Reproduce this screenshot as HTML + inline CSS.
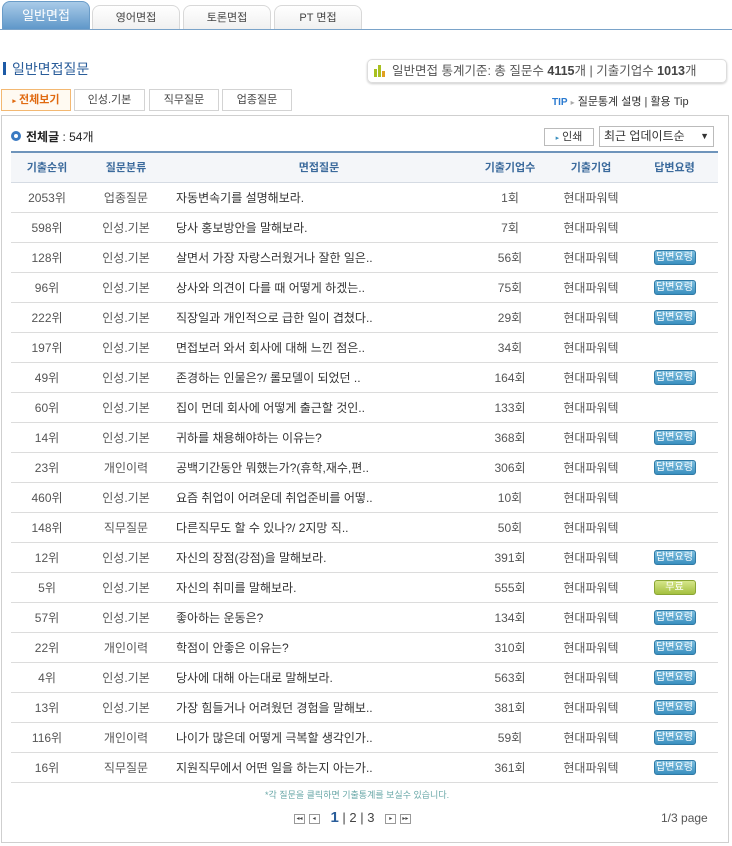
<!DOCTYPE html>
<html><head><meta charset="utf-8">
<style>
*{margin:0;padding:0;box-sizing:border-box}
body{width:732px;height:846px;background:#fff;font-family:"Liberation Sans","Noto Sans CJK KR",sans-serif;font-size:12px;color:#555;position:relative;overflow:hidden}
.a{position:absolute}
.tab{position:absolute;top:5px;height:24px;border:1px solid #d8d8d8;border-bottom:none;border-radius:8px 8px 0 0;background:linear-gradient(#fff,#f0f0f0);text-align:center;line-height:24px;font-size:11px;color:#444}
.tab.on{top:1px;height:28px;background:linear-gradient(#a9cbe8,#5f97c9);border-color:#6a9cc8;color:#fff;font-size:13px;line-height:28px}
.sub{position:absolute;top:89px;height:22px;border:1px solid #d3d3d3;background:#fff;text-align:center;line-height:20px;font-size:11px;color:#444}
.sub.on{border-color:#f3b872;color:#e06a10;font-weight:bold;background:#fffaf2}
table{position:absolute;left:11px;top:151px;width:707px;border-collapse:collapse;border-top:2px solid #6e94bb}
th{height:30px;background:#f4f6f9;color:#3b6a9c;font-size:11px;font-weight:bold;border-bottom:1px solid #d5dbe3}
td{height:30px;border-bottom:1px solid #dcdcdc;font-size:12px;color:#555;text-align:center;white-space:nowrap}
td.q{text-align:left;padding-left:7px;color:#333}
.b{display:inline-block;width:42px;height:15px;border-radius:3px;background:linear-gradient(#7fc0df,#3a8fbf);border:1px solid #2f7aa6;color:#fff;font-size:10px;line-height:13px;vertical-align:middle}
.b.g{background:linear-gradient(#d6e68a,#a4c040);border-color:#8aa534}
.pg{display:inline-block;width:11px;height:10px;border:1px solid #999;font-size:6px;line-height:8px;text-align:center;color:#444;vertical-align:middle}
</style></head><body>
<div class="a" style="left:0;top:29px;width:732px;height:1px;background:#7aa3c9"></div>
<div class="tab on" style="left:2px;width:88px">일반면접</div>
<div class="tab" style="left:92px;width:88px">영어면접</div>
<div class="tab" style="left:183px;width:88px">토론면접</div>
<div class="tab" style="left:274px;width:88px">PT 면접</div>

<div class="a" style="left:3px;top:62px;width:3px;height:13px;background:#1d5aa6"></div>
<div class="a" style="left:12px;top:59px;font-size:14px;color:#2a5d9a">일반면접질문</div>

<div class="a" style="left:367px;top:59px;width:360px;height:24px;border:1px solid #ddd;border-radius:5px;box-shadow:0 1px 2px #ccc;font-size:12.5px;color:#555;line-height:22px;padding-left:24px">
<span class="a" style="left:6px;top:9px;width:3px;height:8px;background:#a8c020"></span><span class="a" style="left:10px;top:5px;width:3px;height:12px;background:#a8c020"></span><span class="a" style="left:14px;top:11px;width:3px;height:6px;background:#e0a020"></span>
일반면접 통계기준: 총 질문수 <b style="color:#444">4115</b>개 | 기출기업수 <b style="color:#444">1013</b>개</div>
<div class="a" style="left:552px;top:93px;font-size:11px;color:#333"><b style="color:#2a7ad0;font-size:10px">TIP</b> <span style="color:#aaa;font-size:8px">▸</span> 질문통계 설명 | 활용 Tip</div>

<div class="sub on" style="left:1px;width:70px"><span style="font-size:7px">▸</span> 전체보기</div>
<div class="sub" style="left:74px;width:71px">인성.기본</div>
<div class="sub" style="left:149px;width:70px">직무질문</div>
<div class="sub" style="left:222px;width:70px">업종질문</div>

<div class="a" style="left:1px;top:115px;width:728px;height:728px;border:1px solid #cfcfcf"></div>
<div class="a" style="left:11px;top:131px;width:10px;height:10px;border:3px solid #3a7ac2;border-radius:50%"></div>
<div class="a" style="left:26px;top:128px;font-size:12px;color:#222"><b>전체글</b> : 54개</div>
<div class="a" style="left:544px;top:128px;width:50px;height:18px;border:1px solid #bbb;font-size:11px;line-height:16px;text-align:center;color:#333"><span style="color:#3a8fbf;font-size:7px">▸</span> 인쇄</div>
<div class="a" style="left:599px;top:126px;width:115px;height:21px;border:1px solid #bbb;font-size:12px;line-height:19px;padding-left:4px;color:#333">최근 업데이트순 <span style="position:absolute;right:4px;font-size:9px">▼</span></div>

<table>
<tr><th style="width:72px">기출순위</th><th style="width:86px">질문분류</th><th style="width:300px">면접질문</th><th style="width:82px">기출기업수</th><th style="width:80px">기출기업</th><th>답변요령</th></tr>
<tr><td>2053위</td><td>업종질문</td><td class="q">자동변속기를 설명해보라.</td><td>1회</td><td>현대파워텍</td><td></td></tr>
<tr><td>598위</td><td>인성.기본</td><td class="q">당사 홍보방안을 말해보라.</td><td>7회</td><td>현대파워텍</td><td></td></tr>
<tr><td>128위</td><td>인성.기본</td><td class="q">살면서 가장 자랑스러웠거나 잘한 일은..</td><td>56회</td><td>현대파워텍</td><td><span class="b">답변요령</span></td></tr>
<tr><td>96위</td><td>인성.기본</td><td class="q">상사와 의견이 다를 때 어떻게 하겠는..</td><td>75회</td><td>현대파워텍</td><td><span class="b">답변요령</span></td></tr>
<tr><td>222위</td><td>인성.기본</td><td class="q">직장일과 개인적으로 급한 일이 겹쳤다..</td><td>29회</td><td>현대파워텍</td><td><span class="b">답변요령</span></td></tr>
<tr><td>197위</td><td>인성.기본</td><td class="q">면접보러 와서 회사에 대해 느낀 점은..</td><td>34회</td><td>현대파워텍</td><td></td></tr>
<tr><td>49위</td><td>인성.기본</td><td class="q">존경하는 인물은?/ 롤모델이 되었던 ..</td><td>164회</td><td>현대파워텍</td><td><span class="b">답변요령</span></td></tr>
<tr><td>60위</td><td>인성.기본</td><td class="q">집이 먼데 회사에 어떻게 출근할 것인..</td><td>133회</td><td>현대파워텍</td><td></td></tr>
<tr><td>14위</td><td>인성.기본</td><td class="q">귀하를 채용해야하는 이유는?</td><td>368회</td><td>현대파워텍</td><td><span class="b">답변요령</span></td></tr>
<tr><td>23위</td><td>개인이력</td><td class="q">공백기간동안 뭐했는가?(휴학,재수,편..</td><td>306회</td><td>현대파워텍</td><td><span class="b">답변요령</span></td></tr>
<tr><td>460위</td><td>인성.기본</td><td class="q">요즘 취업이 어려운데 취업준비를 어떻..</td><td>10회</td><td>현대파워텍</td><td></td></tr>
<tr><td>148위</td><td>직무질문</td><td class="q">다른직무도 할 수 있나?/ 2지망 직..</td><td>50회</td><td>현대파워텍</td><td></td></tr>
<tr><td>12위</td><td>인성.기본</td><td class="q">자신의 장점(강점)을 말해보라.</td><td>391회</td><td>현대파워텍</td><td><span class="b">답변요령</span></td></tr>
<tr><td>5위</td><td>인성.기본</td><td class="q">자신의 취미를 말해보라.</td><td>555회</td><td>현대파워텍</td><td><span class="b g">무료</span></td></tr>
<tr><td>57위</td><td>인성.기본</td><td class="q">좋아하는 운동은?</td><td>134회</td><td>현대파워텍</td><td><span class="b">답변요령</span></td></tr>
<tr><td>22위</td><td>개인이력</td><td class="q">학점이 안좋은 이유는?</td><td>310회</td><td>현대파워텍</td><td><span class="b">답변요령</span></td></tr>
<tr><td>4위</td><td>인성.기본</td><td class="q">당사에 대해 아는대로 말해보라.</td><td>563회</td><td>현대파워텍</td><td><span class="b">답변요령</span></td></tr>
<tr><td>13위</td><td>인성.기본</td><td class="q">가장 힘들거나 어려웠던 경험을 말해보..</td><td>381회</td><td>현대파워텍</td><td><span class="b">답변요령</span></td></tr>
<tr><td>116위</td><td>개인이력</td><td class="q">나이가 많은데 어떻게 극복할 생각인가..</td><td>59회</td><td>현대파워텍</td><td><span class="b">답변요령</span></td></tr>
<tr><td>16위</td><td>직무질문</td><td class="q">지원직무에서 어떤 일을 하는지 아는가..</td><td>361회</td><td>현대파워텍</td><td><span class="b">답변요령</span></td></tr>
</table>

<div class="a" style="left:265px;top:788px;font-size:9px;color:#6aa8a8">*각 질문을 클릭하면 기출통계를 보실수 있습니다.</div>
<div class="a" style="left:294px;top:809px;font-size:13px;color:#444;white-space:nowrap">
<span class="pg">◂◂</span> <span class="pg">◂</span>&nbsp;&nbsp;&nbsp;<b style="color:#2a5d9a;font-size:15px">1</b> | 2 | 3&nbsp;&nbsp;&nbsp;<span class="pg">▸</span> <span class="pg">▸▸</span></div>
<div class="a" style="left:661px;top:811px;font-size:12px;color:#555">1/3 page</div>
</body></html>
